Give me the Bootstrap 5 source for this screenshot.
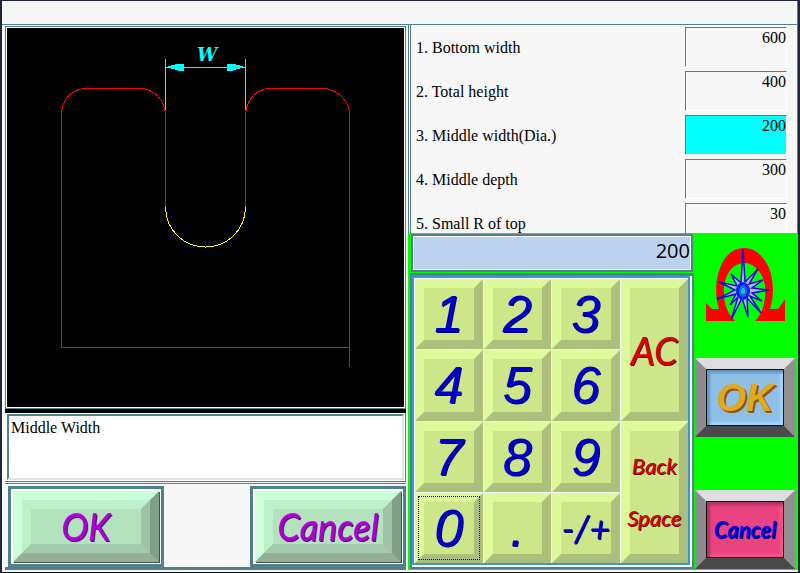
<!DOCTYPE html>
<html lang="en">
<head>
<meta charset="utf-8">
<meta name="viewport" content="width=device-width, initial-scale=1">
<title>Middle Width</title>
<link href="https://cdn.jsdelivr.net/npm/bootstrap@5.3.0/dist/css/bootstrap.min.css" rel="stylesheet">
<style>
  :root { --teal: #508088; --pale: #f7f7f7; }
  body { font-family: "Liberation Serif", serif; font-size: 16px; line-height: 20px; color: #000; background: var(--pale); }
  .screen { border: 2px solid #202538; border-top-width: 1px; border-bottom: 1px solid #101018; }
  .topbar { height: 24px; border-bottom: 1px solid var(--teal); border-right: 1px solid var(--teal); }
  .panes { padding-bottom: 2px; }
  .left-pane { flex: 406 1 406px; min-width: 0; padding: 1px 2px 0 2px; border-left: 1px solid #fff; }
  .right-pane { flex: 390 1 390px; min-width: 0; }
  .drawing { border: 1px solid var(--teal); background: #000; }
  .drawing svg { flex: 1 1 0; min-height: 0; border: 1px solid #fff; }
  .gap-line { height: 4px; background: #000; }
  .note-wrap { padding: 1px 1px 1px 2px; border-right: 1px solid var(--teal); border-bottom: 1px solid var(--teal); background: #fff; }
  .note { height: 66px; resize: none; border: 2px solid var(--teal); border-right-color: #e4e0e8; border-bottom-color: #e4e0e8; padding: 2px; background: #fff; color: #000; outline: 0; overflow: hidden; }
  .actions { border-top: 1px solid var(--teal); border-bottom: 3px solid var(--teal); padding: 2px 0 0 3px; height: 87px; margin-top: 1px; }
  .frame-btn { width: 156px; padding: 2px; border: 3px solid var(--teal); background: #fff; border-radius: 0; display: flex; }
  .green-face { flex: 1; display: flex; border: 9px solid; border-color: #c9ffd6 #7f9f86 #93af99 #ccffda; box-shadow: 1px 1px 0 #405048; }
  .green-inner { flex: 1; display: flex; align-items: center; justify-content: center; background: #b4e2bd; border: 9px solid; border-color: #bcf0ca #a0c2a7 #a5c9ac #bdf0c9; }
  .purple { font: italic 36px/30px Lato, sans-serif; color: #a800d0; text-shadow: 1px 1px 0 #500070, 0 -1px 0 #c810f0; white-space: nowrap; margin: -10px; }
  .form-pane { height: 208px; overflow: hidden; border-left: 3px double var(--teal); padding: 2px 10px 0 5px; border-right: 1px solid var(--teal); }
  .field-row { height: 44px; flex: none; }
  .field-row label { height: 41px; display: flex; align-items: center; }
  .field { width: 102px; height: 40px; border: 1px solid var(--teal); border-right-color: #fff; border-bottom-color: #fff; background: transparent; padding: 0 0 18px; text-align: right; border-radius: 0; outline: 0; color: #000; }
  .field.active-field { background: #0ff; }
  .pad-zone { background: #0f0; flex: 1; }
  .pad-col { flex: 286 1 286px; min-width: 0; padding: 1px 0 1px 2px; }
  .readout { height: 38px; border: 2px solid var(--teal); box-shadow: inset 0 0 0 1px #fff; background: #bdd2ef; text-align: right; padding: 0 1px 6px; font: 20px "Open Sans", "Noto Sans", sans-serif; color: #000; border-radius: 0; outline: 0; margin: 0 1px; }
  .key-frame { flex: 1; margin-top: 1px; border: 2px solid var(--teal); border-top-width: 3px; padding: 0 2px 2px 0; background: #fff; }
  .keys { flex: 1; display: grid; grid-template-columns: repeat(4, minmax(0, 1fr)); grid-template-rows: repeat(4, minmax(0, 1fr)); border: 2px solid #3c98d4; background: #fff; }
  .key { border: 9px solid; border-color: #dcfa99 #acc07c #acc07c #dcfa99; background: #cee68a; margin: 1px 0 0 1px; padding: 0; display: flex; align-items: center; justify-content: center; color: #0000c8; font: italic 52px/40px "Liberation Sans", sans-serif; text-shadow: 1px 1px 0 #000068; }
  .key span { margin: 0 -9px; white-space: nowrap; }
  .key.tall { grid-row: span 2; color: #d80000; text-shadow: 1px 1px 0 #600000; font-family: Lato, sans-serif; }
  .key.clear { font-size: 38px; }
  .key.erase { font-size: 22px; line-height: 52px; }
  .key.sign { font-size: 36px; font-family: Lato, sans-serif; }
  .key.focused { outline: 1px dotted #300060; outline-offset: -4px; }
  .side { flex: 104 1 104px; min-width: 0; padding: 14px 3px 1px 1px; }
  .omega { width: 79px; height: 74px; }
  .metal { width: 100%; height: 79px; padding: 0; border: 11px solid; border-color: #dedede #909090 #4a4a4a #8c8c8c; font: italic bold 38px/40px "Liberation Sans", sans-serif; display: flex; }
  .metal + .metal { margin-top: 53px; }
  .metal span { flex: 1; display: flex; align-items: center; justify-content: center; height: 100%; border: 1px solid #101010; white-space: nowrap; }
  .metal .sky { background: #8fbfe6; box-shadow: inset 3px 3px 3px #6296c0, inset -3px -3px 3px #a0d8ff; color: #e4a820; text-shadow: 1px 1px 0 #805000, 2px 2px 0 #906010; }
  .metal .rose { background: #e9447f; box-shadow: inset 3px 3px 3px #b03060, inset -3px -3px 3px #ff5090; color: #0000e8; text-shadow: 1px 1px 0 #000060; font-family: Lato, sans-serif; font-size: 22px; }
</style>
<script src="https://cdn.jsdelivr.net/npm/bootstrap@5.3.0/dist/js/bootstrap.bundle.min.js"></script>
</head>
<body>
<div class="screen d-flex flex-column min-vh-100">
  <header class="topbar"></header>
  <main class="panes d-flex flex-grow-1">
    <section class="left-pane d-flex flex-column">
      <div class="drawing d-flex flex-grow-1">
        <svg viewBox="7 29 397 378" role="img" aria-label="Profile with middle width W" fill="none" shape-rendering="crispEdges">
          <path d="M61.500 347V111Q66 90 87 88.500H140Q163 92 165.500 114V208M245.500 208V114Q248 92 270 88.500H324Q344 92 349.500 111V367M61 347.500H350" stroke="#f00"/>
          <path d="M165.500 208C166 231 184 247.500 205.500 247.500S245 231 245.500 208" stroke="#ff0"/>
          <path d="M165.500 59V110M245.500 59V110M166 67.500H245" stroke="#0ff"/>
          <path d="M166 67.500L178 64H184V71H178ZM245 67.500L233 64H227V71H233Z" fill="#0ff"/>
          <text x="207" y="61" text-anchor="middle" fill="#0ff" font-family="DejaVu Serif, serif" font-size="18" font-weight="bold" font-style="italic">W</text>
        </svg>
      </div>
      <div class="gap-line"></div>
      <div class="note-wrap d-flex"><textarea class="note w-100" aria-label="Description" readonly>Middle Width</textarea></div>
      <div class="actions d-flex justify-content-between">
        <button type="button" class="frame-btn"><span class="green-face"><span class="green-inner"><span class="purple">OK</span></span></span></button>
        <button type="button" class="frame-btn"><span class="green-face"><span class="green-inner"><span class="purple">Cancel</span></span></span></button>
      </div>
    </section>
    <section class="right-pane d-flex flex-column">
      <form class="form-pane d-flex flex-column">
        <div class="field-row d-flex justify-content-between"><label for="f1">1. Bottom width</label><input id="f1" class="field" value="600"></div>
        <div class="field-row d-flex justify-content-between"><label for="f2">2. Total height</label><input id="f2" class="field" value="400"></div>
        <div class="field-row d-flex justify-content-between"><label for="f3">3. Middle width(Dia.)</label><input id="f3" class="field active-field" value="200"></div>
        <div class="field-row d-flex justify-content-between"><label for="f4">4. Middle depth</label><input id="f4" class="field" value="300"></div>
        <div class="field-row d-flex justify-content-between"><label for="f5">5. Small R of top</label><input id="f5" class="field" value="30"></div>
      </form>
      <div class="pad-zone d-flex">
        <div class="pad-col d-flex flex-column">
          <input class="readout" aria-label="Entered value" value="200">
          <div class="key-frame d-flex">
            <div class="keys">
              <button type="button" class="key"><span>1</span></button>
              <button type="button" class="key"><span>2</span></button>
              <button type="button" class="key"><span>3</span></button>
              <button type="button" class="key tall clear"><span>AC</span></button>
              <button type="button" class="key"><span>4</span></button>
              <button type="button" class="key"><span>5</span></button>
              <button type="button" class="key"><span>6</span></button>
              <button type="button" class="key"><span>7</span></button>
              <button type="button" class="key"><span>8</span></button>
              <button type="button" class="key"><span>9</span></button>
              <button type="button" class="key tall erase"><span>Back<br>Space</span></button>
              <button type="button" class="key focused"><span>0</span></button>
              <button type="button" class="key"><span>.</span></button>
              <button type="button" class="key sign"><span>-/+</span></button>
            </div>
          </div>
        </div>
        <div class="side d-flex flex-column align-items-center">
          <svg class="omega" viewBox="0 0 79 74" aria-hidden="true">
            <path d="M0 74V56L6 62H13C9 50 9 34 14 21C19 8 27 1 38 1S57 8 63 21C68 34 68 50 64 62H72L79 52V74H49C58 65 60 52 59 39C57 25 48 16 38 16S20 25 18 39C17 54 20 65 29 74Z" fill="#f00"/>
            <path d="M37 2L39 35L52 22L43 37L57 33L46 41L63 43L46 46L56 54L44 49L55 66L41 51L42 70L36 51L25 73L32 50L24 58L30 47L11 52L29 43L13 35L31 39L25 27L35 36Z" fill="#b0b8f8" stroke="#1010d0" stroke-width="1.5"/>
            <ellipse cx="37" cy="44" rx="7" ry="9" fill="#0820e8"/>
            <ellipse cx="37" cy="44" rx="4" ry="6" fill="#1070e0"/>
            <ellipse cx="37" cy="44" rx="2" ry="3" fill="#20b8d8"/>
          </svg>
          <button type="button" class="metal mt-auto"><span class="sky">OK</span></button>
          <button type="button" class="metal"><span class="rose">Cancel</span></button>
        </div>
      </div>
    </section>
  </main>
</div>
</body>
</html>
